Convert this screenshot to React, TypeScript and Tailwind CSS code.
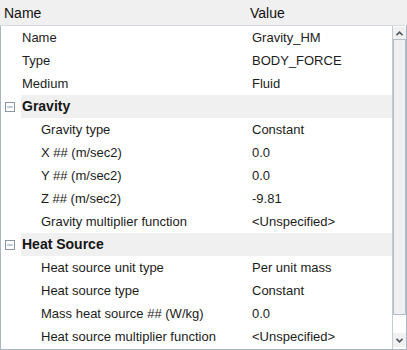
import { Minus } from 'lucide-react';

type Row =
  | { kind: 'prop'; label: string; value: string; depth: number }
  | { kind: 'group'; label: string };

const rows: Row[] = [
  { kind: 'prop', label: 'Name', value: 'Gravity_HM', depth: 0 },
  { kind: 'prop', label: 'Type', value: 'BODY_FORCE', depth: 0 },
  { kind: 'prop', label: 'Medium', value: 'Fluid', depth: 0 },
  { kind: 'group', label: 'Gravity' },
  { kind: 'prop', label: 'Gravity type', value: 'Constant', depth: 1 },
  { kind: 'prop', label: 'X ## (m/sec2)', value: '0.0', depth: 1 },
  { kind: 'prop', label: 'Y ## (m/sec2)', value: '0.0', depth: 1 },
  { kind: 'prop', label: 'Z ## (m/sec2)', value: '-9.81', depth: 1 },
  { kind: 'prop', label: 'Gravity multiplier function', value: '<Unspecified>', depth: 1 },
  { kind: 'group', label: 'Heat Source' },
  { kind: 'prop', label: 'Heat source unit type', value: 'Per unit mass', depth: 1 },
  { kind: 'prop', label: 'Heat source type', value: 'Constant', depth: 1 },
  { kind: 'prop', label: 'Mass heat source ## (W/kg)', value: '0.0', depth: 1 },
  { kind: 'prop', label: 'Heat source multiplier function', value: '<Unspecified>', depth: 1 }
];

function Chevron({ up }: { up?: boolean }) {
  return (
    <svg width="7" height="5" viewBox="0 0 7 5" className="text-[#505860]">
      <path
        d={up ? 'M0.5 4.2 L3.5 1.2 L6.5 4.2' : 'M0.5 0.8 L3.5 3.8 L6.5 0.8'}
        fill="none"
        stroke="currentColor"
        strokeWidth="1.6"
      />
    </svg>
  );
}

export default function App() {
  return (
    <div className="flex h-[350px] w-[407px] flex-col bg-white font-['Liberation_Sans',Arial,sans-serif] text-[13px] text-[#1c1c1c]">
      <div className="grid h-[26px] shrink-0 grid-cols-[250px_1fr] items-center border-b border-[#d5dbe1] bg-[#f0f0f0] text-[14px] text-[#101010]">
        <span className="pl-[4px] pt-[2px]">Name</span>
        <span className="pt-[2px]">Value</span>
      </div>
      <div className="flex min-h-0 flex-1 border-x border-b border-[#aab6c2]">
        <div className="flex-1">
          {rows.map((row) =>
            row.kind === 'group' ? (
              <div className="flex h-[23px] items-center" key={row.label}>
                <div className="ml-[4px] mr-[6px] grid h-[10px] w-[10px] place-items-center border border-[#8a96a4] bg-white text-[#3a5f9a]">
                  <Minus size={8} strokeWidth={2} />
                </div>
                <div className="flex h-full flex-1 items-center bg-[#f0f0f0] pl-[1px] text-[14px] font-bold text-[#151515]">
                  {row.label}
                </div>
              </div>
            ) : (
              <div className="grid h-[23px] grid-cols-[251px_1fr] items-center" key={row.label}>
                <span className={row.depth === 0 ? 'pl-[21px]' : 'pl-[40px]'}>{row.label}</span>
                <span>{row.value}</span>
              </div>
            )
          )}
        </div>
        <div className="flex w-[14px] flex-col border-l border-[#c3ccd5] pt-[1px] pb-[2px]">
          <div className="grid h-[12px] place-items-center bg-[#f0f0f0]">
            <Chevron up />
          </div>
          <div className="mx-[0px] h-[276px] border border-[#b4bec8] bg-[#f0f0f0]" />
          <div className="flex-1 bg-white" />
          <div className="grid h-[14px] place-items-center bg-[#f0f0f0]">
            <Chevron />
          </div>
        </div>
      </div>
    </div>
  );
}
